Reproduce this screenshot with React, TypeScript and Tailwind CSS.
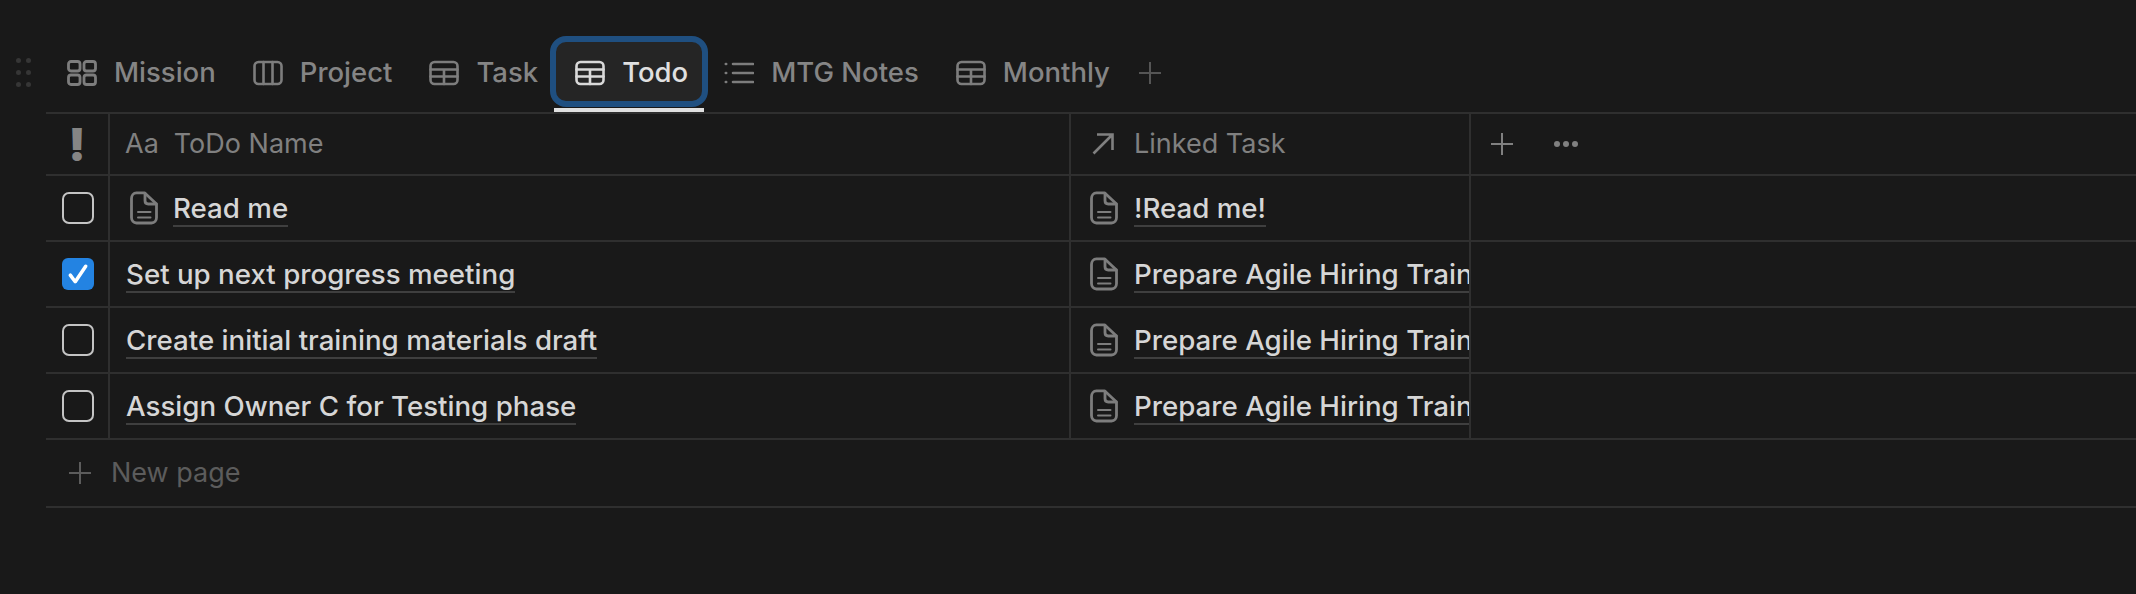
import React from "react";

const font = { fontFamily: 'Inter, "Liberation Sans", sans-serif' };

const Svg = ({ w, h, vb, c, sw = 2.6, children }: { w: number; h: number; vb: string; c: string; sw?: number; children: React.ReactNode }) => (
  <svg width={w} height={h} viewBox={vb} fill="none" stroke={c} strokeWidth={sw} strokeLinecap="round" strokeLinejoin="round" className="relative shrink-0">
    {children}
  </svg>
);

const Gallery = ({ c }: { c: string }) => (
  <Svg w={30} h={26} vb="0 0 30 26" c={c} sw={2.8}>
    <rect x="1.5" y="1.5" width="11.5" height="9.500" rx="2.500" />
    <rect x="17" y="1.5" width="11.5" height="9.500" rx="2.500" />
    <rect x="1.5" y="15" width="11.5" height="9.500" rx="2.500" />
    <rect x="17" y="15" width="11.5" height="9.500" rx="2.500" />
  </Svg>
);
const Board = ({ c }: { c: string }) => (
  <Svg w={30} h={26} vb="0 0 30 26" c={c}>
    <rect x="1.5" y="2" width="27" height="22" rx="4" />
    <path d="M10.5 2v22M19.5 2v22" />
  </Svg>
);
const TableIcon = ({ c }: { c: string }) => (
  <Svg w={30} h={26} vb="0 0 30 26" c={c}>
    <rect x="1.5" y="2" width="27" height="22" rx="4" />
    <path d="M1.5 9.500h27M1.5 16.500h27M15 9.500v14.500" />
  </Svg>
);
const ListIcon = ({ c }: { c: string }) => (
  <Svg w={30} h={26} vb="0 0 30 26" c={c}>
    <path d="M9 4h20M9 13h20M9 22h20" />
    <path d="M1.800 4h.4M1.800 13h.4M1.800 22h.4" />
  </Svg>
);
const Plus = ({ s, c }: { s: number; c: string }) => (
  <svg width={s} height={s} viewBox="0 0 22 22" fill="none" stroke={c} strokeWidth="2" className="shrink-0">
    <path d="M11 0v22M0 11h22" />
  </svg>
);
const Doc = () => (
  <svg width={28} height={34} viewBox="0 0 28 34" fill="none" stroke="#7d7d7d" strokeWidth="2.8" strokeLinecap="round" strokeLinejoin="round" className="shrink-0">
    <path d="M6.500 1.800h8L26.500 13v13.500c0 3-2 5.500-5 5.500h-15c-3 0-5-2.500-5-5.500v-19c0-3 2-5.700 5-5.700z" />
    <path d="M15 2.500v7c0 2 1.200 3.500 3.200 3.500h8" />
    <path d="M8 21h12.500M8 26.500h12.500" strokeWidth="2" />
  </svg>
);
const Check = () => (
  <svg width={22} height={22} viewBox="0 0 20 20" fill="none" stroke="#ffffff" strokeWidth="3.200" strokeLinecap="round" strokeLinejoin="round">
    <path d="M3 11l4.500 6L17 3" />
  </svg>
);

const tabs = [
  { label: "Mission", Icon: Gallery },
  { label: "Project", Icon: Board },
  { label: "Task", Icon: TableIcon },
  { label: "Todo", Icon: TableIcon, active: true },
  { label: "MTG Notes", Icon: ListIcon },
  { label: "Monthly", Icon: TableIcon },
];

const rows = [
  { name: "Read me", doc: true, link: "!Read me!", checked: false },
  { name: "Set up next progress meeting", link: "Prepare Agile Hiring Training", checked: true },
  { name: "Create initial training materials draft", link: "Prepare Agile Hiring Training", checked: false },
  { name: "Assign Owner C for Testing phase", link: "Prepare Agile Hiring Training", checked: false },
];

export default function App() {
  return (
    <div className="min-h-screen w-full overflow-hidden bg-[#191919] pt-[38px]" style={font}>
      <div className="flex h-[74px] items-start pl-[16px]">
        <div className="mt-[20px] grid w-[14px] shrink-0 grid-cols-2 gap-x-[6px] gap-y-[7px]">
          {[0, 1, 2, 3, 4, 5].map((i) => (
            <span key={i} className="h-[5px] w-[5px] rounded-full bg-[#363636]" />
          ))}
        </div>
        <div className="ml-[17px] flex items-start">
          {tabs.map(({ label, Icon, active }) => (
            <div key={label} className={"flex flex-col " + (active ? "ml-[-1px]" : "")}>
              <div
                className={
                  "relative flex h-[68px] items-center gap-[17px] pt-[1px] text-[27.5px] font-medium " +
                  (active ? "pl-[21px] pr-[16px] text-[#e0e0e0]" : "pl-[20px] pr-[17px] text-[#858585]")
                }
              >
                {active && (
                  <div className="absolute -inset-x-[4px] -bottom-[1px] -top-[2px] rounded-[16px] border-[6px] border-[#1f4f80] bg-[#252525]" />
                )}
                <Icon c={active ? "#d9d9d9" : "#7d7d7d"} />
                <span className="relative">{label}</span>
              </div>
              <div className={"relative mt-[2px] h-[4px] " + (active ? "bg-[#e0e0e0]" : "")} />
            </div>
          ))}
          <div className="ml-[12px] flex h-[68px] items-center pt-[1px]">
            <Plus s={22} c="#555555" />
          </div>
        </div>
      </div>

      <div className="ml-[46px] border-t-2 border-[#2f2f2f]">
        <div className="flex h-[62px] border-b-2 border-[#2f2f2f] text-[27px] text-[#808080]">
          <div className="flex w-[64px] shrink-0 items-center justify-center border-r-2 border-[#2f2f2f] text-[46px] font-black leading-none text-[#858585]">
            !
          </div>
          <div className="flex w-[961px] shrink-0 items-center gap-[15px] border-r-2 border-[#2f2f2f] pl-[15px]">
            <span className="text-[#808080]">Aa</span>
            <span>ToDo Name</span>
          </div>
          <div className="flex w-[400px] shrink-0 items-center gap-[20px] border-r-2 border-[#2f2f2f] pl-[21px]">
            <svg width={22} height={22} viewBox="0 0 22 22" fill="none" stroke="#808080" strokeWidth="2.600" className="shrink-0">
              <path d="M1.500 20.500L20 2M5 1.500h15.500V17" />
            </svg>
            <span>Linked Task</span>
          </div>
          <div className="flex items-center gap-[41px] pl-[20px]">
            <Plus s={22} c="#808080" />
            <div className="flex gap-[3px]">
              <span className="h-[6px] w-[6px] rounded-full bg-[#808080]" />
              <span className="h-[6px] w-[6px] rounded-full bg-[#808080]" />
              <span className="h-[6px] w-[6px] rounded-full bg-[#808080]" />
            </div>
          </div>
        </div>

        {rows.map((r) => (
          <div key={r.name} className="flex h-[66px] border-b-2 border-[#2f2f2f] text-[27.7px] font-[550] text-[#d6d6d6]">
            <div className="flex w-[64px] shrink-0 items-center border-r-2 border-[#2f2f2f] pl-[16px]">
              {r.checked ? (
                <div className="flex h-[32px] w-[32px] items-center justify-center rounded-[6px] bg-[#2383e2]">
                  <Check />
                </div>
              ) : (
                <div className="h-[32px] w-[32px] rounded-[7px] border-[2.500px] border-[#c4c4c4]" />
              )}
            </div>
            <div className={"flex w-[961px] shrink-0 items-center gap-[15px] border-r-2 border-[#2f2f2f] " + (r.doc ? "pl-[20px]" : "pl-[16px]")}>
              {r.doc && <Doc />}
              <span className="mt-[2px] border-b-2 border-[#3f3f3f] leading-[33px]">{r.name}</span>
            </div>
            <div className="flex w-[400px] shrink-0 items-center gap-[16px] overflow-hidden border-r-2 border-[#2f2f2f] pl-[19px]">
              <Doc />
              <span className="mt-[2px] whitespace-nowrap border-b-2 border-[#3f3f3f] leading-[33px]">{r.link}</span>
            </div>
          </div>
        ))}

        <div className="flex h-[68px] items-center gap-[20px] border-b-2 border-[#2f2f2f] pl-[23px] text-[27px] text-[#5c5c5c]">
          <Plus s={22} c="#5c5c5c" />
          <span>New page</span>
        </div>
      </div>
    </div>
  );
}
